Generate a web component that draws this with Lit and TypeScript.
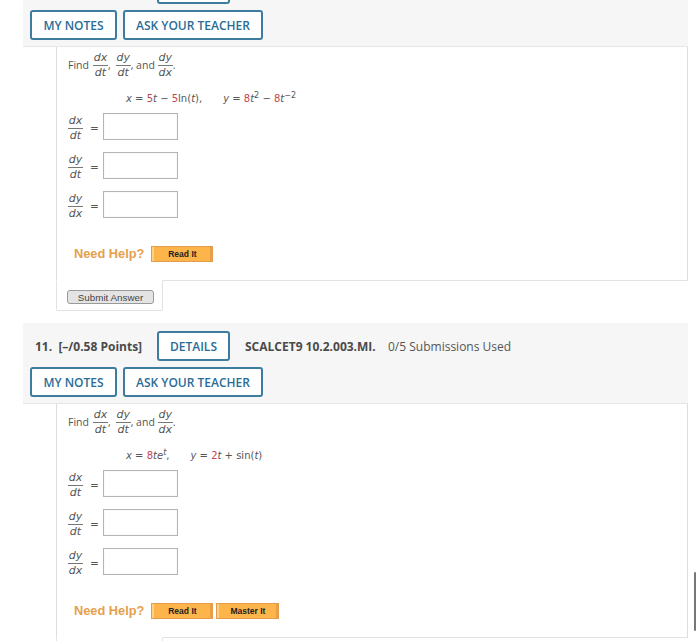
import { LitElement, html, css } from 'lit';
import { customElement, property } from 'lit/decorators.js';

const frac = (a: string, b: string) => html`
  <span class="frac"><i>${a}</i><i class="den">${b}</i></span>
`;

@customElement('app-question')
export class AppQuestion extends LitElement {
  static styles = css`
    :host {
      display: block;
      font-family: 'Open Sans', sans-serif;
      color: #555;
    }
    .head {
      height: 81px;
      box-sizing: border-box;
      padding: 8px 0 0 7px;
      background: #f6f6f6;
      border-bottom: 1px solid #e6e6e6;
    }
    .row {
      display: flex;
      align-items: center;
      height: 30px;
      margin-bottom: 6px;
      font-size: 12px;
      white-space: nowrap;
    }
    .num {
      font-weight: 700;
      margin-left: 5px;
      width: 122px;
      white-space: pre;
      color: #4a4a4a;
    }
    .code {
      font-weight: 700;
      margin-left: 15px;
      width: 143px;
      color: #4a4a4a;
    }
    .btn {
      box-sizing: border-box;
      height: 30px;
      display: flex;
      align-items: center;
      justify-content: center;
      border: 2px solid #3d7b9f;
      border-radius: 3px;
      background: #fff;
      color: #2a6c96;
      font-weight: 600;
      font-size: 12px;
    }
    .details { width: 73px; }
    .notes { width: 87px; margin-right: 6px; }
    .ask { width: 140px; }
    .body {
      margin-left: 33px;
      height: 234px;
      box-sizing: border-box;
      padding: 3px 12px 0 11px;
      background: #fff;
      border-left: 1px solid #ddd;
      border-right: 1px solid #ddd;
      border-bottom: 1px solid #e2e2e2;
      font-size: 10.5px;
    }
    .find {
      display: flex;
      align-items: center;
      height: 30px;
    }
    .after-find { margin-right: 4px; }
    .after-comma { margin-right: 5px; }
    .after-and { margin-right: 3px; }
    .frac {
      display: inline-flex;
      flex-direction: column;
      align-items: center;
      width: 15px;
      font-family: 'DejaVu Sans', sans-serif;
      font-size: 11px;
      line-height: 14px;
    }
    .den {
      border-top: 1px solid #777;
      align-self: stretch;
      text-align: center;
    }
    .eq {
      display: flex;
      gap: 21px;
      margin: 9px 0 6px 58px;
      height: 18px;
      align-items: center;
      font-family: 'DejaVu Sans', sans-serif;
      font-size: 10px;
      white-space: pre;
    }
    .eq b {
      color: #c2454f;
      font-weight: 400;
    }
    .eq sup {
      font-size: 8px;
      line-height: 0;
    }
    .ans {
      display: flex;
      align-items: center;
      height: 27px;
      margin-bottom: 12px;
    }
    .ans .frac {
      margin-top: 3px;
    }
    .sign {
      margin: 3px 7px 0;
      width: 6px;
      font-family: 'DejaVu Sans', sans-serif;
    }
    .box {
      width: 75px;
      height: 27px;
      box-sizing: border-box;
      border: 1px solid #b4b4b4;
      box-shadow: inset 0 0 1px #ccc;
    }
    .help {
      display: flex;
      align-items: center;
      gap: 3px;
      margin: 28px 0 0 6px;
      height: 16px;
    }
    .help-label {
      font-family: 'Liberation Sans', Arial, sans-serif;
      font-weight: 700;
      font-size: 12.8px;
      color: #e5a04e;
      margin-right: 4px;
      padding-bottom: 2px;
    }
    .orange {
      box-sizing: border-box;
      height: 16px;
      display: flex;
      align-items: center;
      justify-content: center;
      background: #fdb44a;
      border: 1px solid #e39b4c;
      box-shadow: inset 2px 0 0 #fdd08a, inset -2px 0 0 #e6a04a;
      font-family: 'Liberation Sans', Arial, sans-serif;
      font-weight: 700;
      font-size: 8.5px;
      color: #222;
    }
    .read { width: 62px; }
    .master { width: 63px; }
    .tab {
      margin-left: 33px;
      margin-top: -1px;
      width: 107px;
      height: 31px;
      box-sizing: border-box;
      background: #fff;
      border: 1px solid #e2e2e2;
      border-top: 1px solid #fff;
      padding: 9px 0 0 10px;
      border-radius: 0 0 2px 2px;
    }
    .submit {
      box-sizing: border-box;
      width: 87px;
      height: 14px;
      display: flex;
      align-items: center;
      justify-content: center;
      background: #e4e4e4;
      border: 1px solid #999;
      border-radius: 3px;
      font-family: 'Liberation Sans', Arial, sans-serif;
      font-size: 9.8px;
      color: #444;
    }
  `;

  // the first question is scrolled past the top, its label row shows no text
  @property({ type: String }) label = '';
  @property({ type: Boolean }) master = false;
  // the last question runs past the bottom, before its submit button
  @property({ type: Boolean }) cut = false;
  @property({ attribute: false }) equation: unknown = '';

  render() {
    return html`
      <div class="head">
        <div class="row">
          <span class="num">${this.label}</span>
          <span class="btn details">${this.label ? 'DETAILS' : ''}</span>
          ${this.label
            ? html`<span class="code">SCALCET9 10.2.003.MI.</span>
                <span>0/5 Submissions Used</span>`
            : ''}
        </div>
        <div class="row">
          <span class="btn notes">MY NOTES</span>
          <span class="btn ask">ASK YOUR TEACHER</span>
        </div>
      </div>
      <div class="body">
        <div class="find">
          <span class="after-find">Find</span>
          ${frac('dx', 'dt')}<span class="after-comma">,</span>
          ${frac('dy', 'dt')}<span class="after-and">, and</span>
          ${frac('dy', 'dx')}<span>.</span>
        </div>
        <div class="eq">${this.equation}</div>
        ${[['dx', 'dt'], ['dy', 'dt'], ['dy', 'dx']].map(
          ([a, b]) => html`
            <div class="ans">
              ${frac(a, b)}<span class="sign">=</span><span class="box"></span>
            </div>
          `
        )}
        <div class="help">
          <span class="help-label">Need Help?</span>
          <span class="orange read">Read It</span>
          ${this.master ? html`<span class="orange master">Master It</span>` : ''}
        </div>
      </div>
      <div class="tab">
        ${this.cut ? '' : html`<span class="submit">Submit Answer</span>`}
      </div>
    `;
  }
}

@customElement('app-root')
export class AppRoot extends LitElement {
  static styles = css`
    :host {
      display: block;
      height: 641px;
      overflow: hidden;
      position: relative;
      background: #fff;
    }
    .page {
      width: 665px;
      margin: -34px 0 0 23px;
      display: flex;
      flex-direction: column;
      gap: 12px;
    }
    .thumb {
      position: absolute;
      left: 694px;
      top: 572px;
      width: 2px;
      height: 59px;
      border-radius: 1px;
      background: #777;
    }
  `;

  render() {
    return html`
      <div class="page">
        <app-question
          .equation=${html`<span><i>x</i> = <b>5</b><i>t</i> − <b>5</b>ln(<i>t</i>),</span
            ><span><i>y</i> = <b>8</b><i>t</i><sup>2</sup> − <b>8</b><i>t</i><sup>−2</sup></span>`}
        ></app-question>
        <app-question
          label="11.  [–/0.58 Points]"
          master
          cut
          .equation=${html`<span><i>x</i> = <b>8</b><i>te</i><sup><i>t</i></sup>,</span
            ><span><i>y</i> = <b>2</b><i>t</i> + sin(<i>t</i>)</span>`}
        ></app-question>
      </div>
      <div class="thumb"></div>
    `;
  }
}
